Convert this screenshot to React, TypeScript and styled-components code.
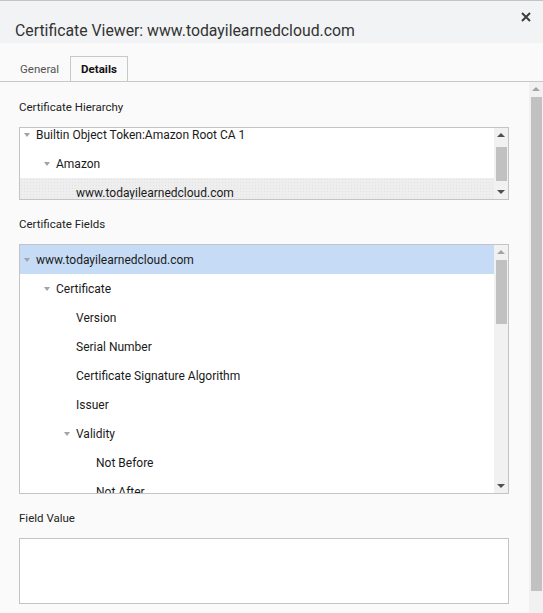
import React from 'react';
import styled, { createGlobalStyle } from 'styled-components';

const GlobalStyle = createGlobalStyle`
  html, body {
    margin: 0;
    padding: 0;
    height: 100%;
    overflow: hidden;
  }
  body {
    font-family: Roboto, "Noto Sans", "Liberation Sans", sans-serif;
    background: #fafafa;
    color: #202124;
  }
  #root {
    height: 100%;
  }
`;

const Dialog = styled.div`
  height: 613px;
  display: flex;
  flex-direction: column;
  border-top: 1px solid #c4c4c4;
  box-sizing: border-box;
  background: #fafafa;
`;

const Header = styled.div`
  height: 42px;
  background: #f2f3f5;
  display: flex;
  align-items: flex-end;
  justify-content: space-between;
  padding: 0 10px 0 15px;
  position: relative;
`;

const Title = styled.h1`
  margin: 0 0 2px;
  font-size: 15.8px;
  font-weight: 400;
  color: #333;
  line-height: 20px;
`;

const CloseButton = styled.button`
  position: absolute;
  right: 9px;
  top: 8px;
  width: 16px;
  height: 16px;
  padding: 0;
  border: none;
  background: none;
  display: flex;
  align-items: center;
  justify-content: center;
`;

const TabBar = styled.div`
  height: 39px;
  display: flex;
  align-items: flex-end;
  padding-left: 8px;
  border-bottom: 1px solid #c8c8c8;
  box-sizing: border-box;
`;

const Tab = styled.div<{ $active?: boolean }>`
  height: 25px;
  padding: 0 10px 0 ${(p) => (p.$active ? '10px' : '11px')};
  box-sizing: border-box;
  font-size: 11.5px;
  line-height: 25px;
  font-weight: ${(p) => (p.$active ? 700 : 400)};
  color: ${(p) => (p.$active ? '#111' : '#555')};
  border: 1px solid ${(p) => (p.$active ? '#c8c8c8' : 'transparent')};
  border-bottom: none;
  background: #fafafa;
`;

const Body = styled.div`
  flex: 1;
  display: flex;
  min-height: 0;
`;

const Content = styled.div`
  flex: 1;
  padding: 17px 20px 0 19px;
  display: flex;
  flex-direction: column;
`;

const Label = styled.div<{ $first?: boolean }>`
  font-size: 11.5px;
  line-height: 16px;
  color: #222;
  margin: ${(p) => (p.$first ? '0' : '16px')} 0 12px;
`;

const Box = styled.div<{ $height: number }>`
  height: ${(p) => p.$height}px;
  border: 1px solid #c4c4c4;
  background: #fff;
  display: flex;
  box-sizing: border-box;
  overflow: hidden;
`;

const TreeList = styled.div<{ $offset?: number }>`
  flex: 1;
  margin-top: ${(p) => -(p.$offset || 0)}px;
  display: flex;
  flex-direction: column;
  min-width: 0;
`;

const Row = styled.div<{ $level: number; $selected?: 'blue' | 'gray' }>`
  height: 29px;
  flex-shrink: 0;
  display: flex;
  align-items: center;
  padding-left: ${(p) => 4 + p.$level * 20}px;
  font-size: 12px;
  color: #1a1a1a;
  background: ${(p) =>
    p.$selected === 'blue' ? '#c6dcf6' : p.$selected === 'gray' ? '#eeeeee' : 'transparent'};
  ${(p) =>
    p.$selected === 'gray'
      ? 'background-image: radial-gradient(#e2e2e2 0.6px, transparent 0.6px); background-size: 3px 3px;'
      : ''}
  white-space: nowrap;
`;

const Twisty = styled.span<{ $open?: boolean }>`
  width: 12px;
  flex-shrink: 0;
  display: flex;
  align-items: center;

  &::before {
    content: '';
    display: ${(p) => (p.$open ? 'block' : 'none')};
    width: 0;
    height: 0;
    border-left: 3.5px solid transparent;
    border-right: 3.5px solid transparent;
    border-top: 4px solid #a3a3a3;
  }
`;

const Scrollbar = styled.div<{ $width: number }>`
  width: ${(p) => p.$width}px;
  flex-shrink: 0;
  background: #f1f1f1;
  display: flex;
  flex-direction: column;
  align-items: center;
`;

const ArrowButton = styled.div<{ $dir: 'up' | 'down'; $dim?: boolean }>`
  height: 14px;
  width: 100%;
  flex-shrink: 0;
  display: flex;
  align-items: center;
  justify-content: center;

  &::before {
    content: '';
    width: 0;
    height: 0;
    border-left: 4px solid transparent;
    border-right: 4px solid transparent;
    ${(p) => (p.$dir === 'up' ? 'border-bottom' : 'border-top')}: 4px solid
      ${(p) => (p.$dim ? '#a3a3a3' : '#505050')};
  }
`;

const Track = styled.div`
  flex: 1;
  width: 100%;
  display: flex;
  justify-content: center;
`;

const Thumb = styled.div<{ $width: number }>`
  width: ${(p) => p.$width}px;
  background: #c1c1c1;
`;

function ScrollBar({
  width,
  thumbWidth,
  top,
  height,
  upDim,
  hideDown,
}: {
  width: number;
  thumbWidth: number;
  top: number;
  height: number;
  upDim?: boolean;
  hideDown?: boolean;
}) {
  return (
    <Scrollbar $width={width}>
      <ArrowButton $dir="up" $dim={upDim} />
      <Track>
        <Thumb $width={thumbWidth} style={{ marginTop: top, height }} />
      </Track>
      {!hideDown && <ArrowButton $dir="down" />}
    </Scrollbar>
  );
}

const hierarchy = [
  { level: 0, open: true, text: 'Builtin Object Token:Amazon Root CA 1' },
  { level: 1, open: true, text: 'Amazon' },
  { level: 2, open: false, text: 'www.todayilearnedcloud.com', selected: 'gray' as const },
];

const fields = [
  { level: 0, open: true, text: 'www.todayilearnedcloud.com', selected: 'blue' as const },
  { level: 1, open: true, text: 'Certificate' },
  { level: 2, open: false, text: 'Version' },
  { level: 2, open: false, text: 'Serial Number' },
  { level: 2, open: false, text: 'Certificate Signature Algorithm' },
  { level: 2, open: false, text: 'Issuer' },
  { level: 2, open: true, text: 'Validity' },
  { level: 3, open: false, text: 'Not Before' },
  { level: 3, open: false, text: 'Not After' },
];

export default function App() {
  return (
    <>
      <GlobalStyle />
      <Dialog>
        <Header>
          <Title>Certificate Viewer: www.todayilearnedcloud.com</Title>
          <CloseButton aria-label="Close">
            <svg width="10" height="10" viewBox="0 0 10 10">
              <path d="M1 1 L9 9 M9 1 L1 9" stroke="#3c3c3c" strokeWidth="2" />
            </svg>
          </CloseButton>
        </Header>
        <TabBar>
          <Tab>General</Tab>
          <Tab $active>Details</Tab>
        </TabBar>
        <Body>
          <Content>
            <Label $first>Certificate Hierarchy</Label>
            <Box $height={73}>
              <TreeList $offset={8}>
                {hierarchy.map((r) => (
                  <Row key={r.text} $level={r.level} $selected={r.selected}>
                    <Twisty $open={r.open} />
                    {r.text}
                  </Row>
                ))}
              </TreeList>
              <ScrollBar width={14} thumbWidth={11} top={5} height={34} />
            </Box>

            <Label>Certificate Fields</Label>
            <Box $height={250}>
              <TreeList>
                {fields.map((r) => (
                  <Row key={r.text} $level={r.level} $selected={r.selected}>
                    <Twisty $open={r.open} />
                    {r.text}
                  </Row>
                ))}
              </TreeList>
              <ScrollBar width={14} thumbWidth={11} top={1} height={64} upDim />
            </Box>

            <Label>Field Value</Label>
            <Box $height={66} />
          </Content>
          <ScrollBar width={14} thumbWidth={11} top={1} height={494} upDim hideDown />
        </Body>
      </Dialog>
    </>
  );
}
